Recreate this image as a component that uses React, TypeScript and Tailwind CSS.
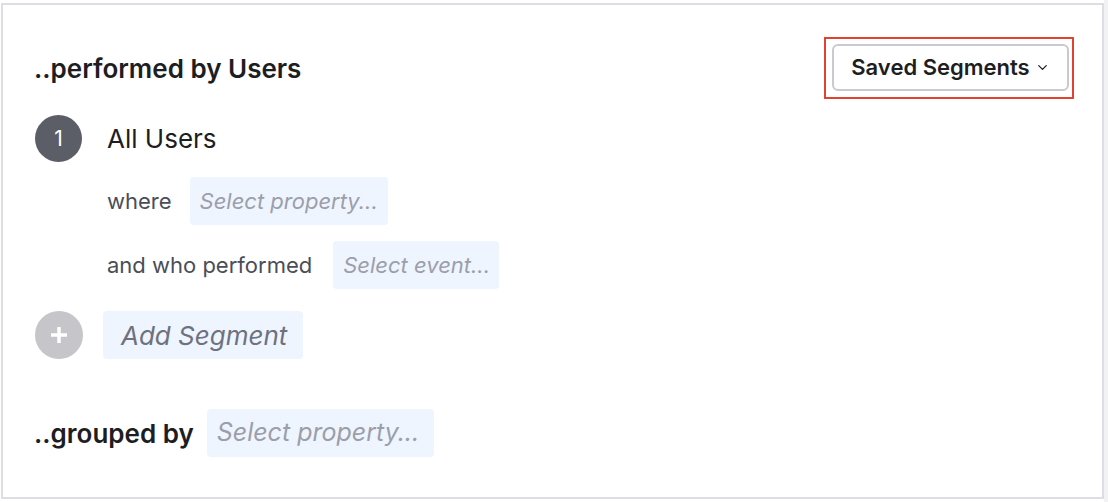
import { ChevronDown } from 'lucide-react'

const font = { fontFamily: 'Inter, "Noto Sans", "Liberation Sans", sans-serif' }

function Picker({ label, className = '' }: { label: string; className?: string }) {
  return (
    <div
      className={`flex h-[48px] items-center whitespace-nowrap rounded-[4px] bg-[#eef5fe] px-[10px] italic text-[#9c9eaa] ${className}`}
    >
      {label}
    </div>
  )
}

function App() {
  return (
    <div className="flex h-[502px] w-[1108px] bg-white" style={font}>
      <div className="mt-[3px] ml-[1px] flex h-[496px] w-[1103px] flex-col border-2 border-[#dddde3] pl-[32px] pr-[28px] pt-[32px]">
        <div className="flex items-center justify-between">
          <h2 className="-ml-[1px] text-[26px] font-semibold text-[#1d1e22]">..performed by Users</h2>
          <div className="border-2 border-[#e2432f] pt-[5px] pb-[6px] pl-[6px] pr-[3px]">
            <button className="flex h-[47px] w-[237px] items-center justify-center gap-[5px] rounded-[6px] border-2 border-[#c9c9d0] bg-white text-[22px] font-semibold text-[#1d1e22]">
              Saved Segments
              <ChevronDown size={15} strokeWidth={2} />
            </button>
          </div>
        </div>

        <div className="mt-[16px] flex items-center">
          <div className="flex h-[47px] w-[47px] items-center justify-center rounded-full bg-[#5b5d67] text-[21px] text-white">
            1
          </div>
          <span className="ml-[25px] text-[26px] text-[#1d1e22]">All Users</span>
        </div>

        <div className="mt-[15px] ml-[72px] flex items-center gap-[18px] text-[22px]">
          <span className="text-[#4b4d57]">where</span>
          <Picker label="Select property..." className="w-[198px]" />
        </div>

        <div className="mt-[16px] ml-[72px] flex items-center gap-[21px] text-[22px]">
          <span className="text-[#4b4d57]">and who performed</span>
          <Picker label="Select event..." className="w-[166px]" />
        </div>

        <div className="mt-[22px] flex items-center">
          <div className="flex h-[48px] w-[48px] items-center justify-center rounded-full bg-[#c5c5ca]">
            <svg width="20" height="20" viewBox="0 0 20 20">
              <path d="M10 2v16M2 10h16" stroke="white" strokeWidth="3.5" />
            </svg>
          </div>
          <div className="ml-[20px] flex h-[48px] w-[200px] items-center rounded-[4px] bg-[#eef5fe] pl-[18px] text-[26px] italic text-[#6e7180]">
            Add Segment
          </div>
        </div>

        <div className="mt-[50px] flex items-center gap-[13px]">
          <span className="-ml-[1px] text-[26px] font-semibold text-[#1d1e22]">..grouped by</span>
          <Picker label="Select property..." className="w-[227px] text-[25px]" />
        </div>
      </div>
      <div className="h-full w-[4px] bg-[#f2f2f4]" />
    </div>
  )
}

export default App
